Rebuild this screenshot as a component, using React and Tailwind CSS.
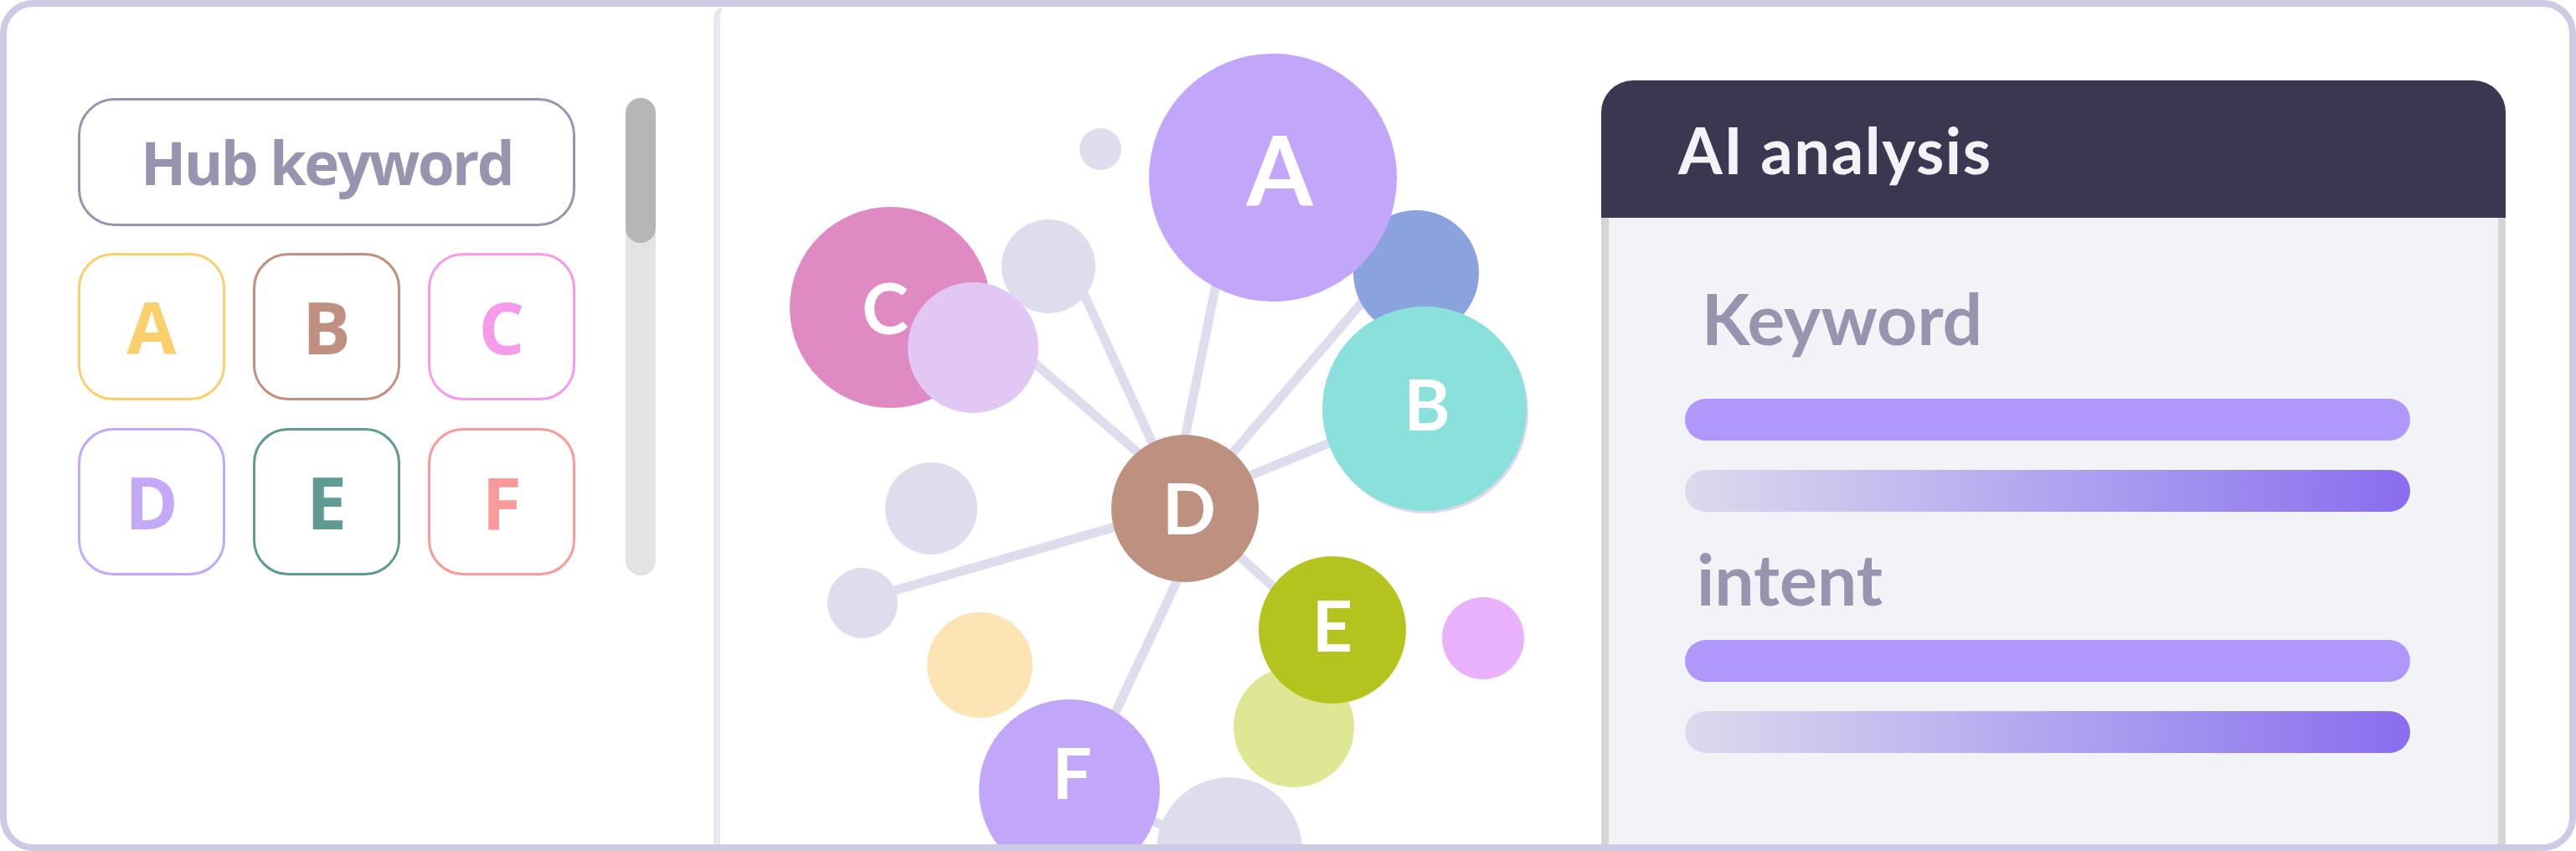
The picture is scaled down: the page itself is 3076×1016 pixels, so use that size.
// Hub keyword graph illustration: keyword picker, bubble graph, AI analysis card

const SANS = { fontFamily: '"Open Sans", "Noto Sans", sans-serif' };
const LABEL = 'Lato, "Noto Sans", sans-serif';

const KEYS = [
  { id: "A", color: "border-[#f9d06c] text-[#f9d06c]" },
  { id: "B", color: "border-[#bf9080] text-[#bf9080]" },
  { id: "C", color: "border-[#f79ae9] text-[#f79ae9]" },
  { id: "D", color: "border-[#c4a8fa] text-[#c4a8fa]" },
  { id: "E", color: "border-[#5f9a93] text-[#5f9a93]" },
  { id: "F", color: "border-[#fa9a9a] text-[#fa9a9a]" },
];

// page coordinates, the svg viewBox starts where the graph area starts
const EDGES = [
  [1398, 607, 1462, 290],
  [1415, 607, 1660, 322],
  [1415, 600, 1640, 507],
  [1412, 607, 1280, 320],
  [1415, 589, 1200, 403],
  [1415, 605, 1030, 716],
  [1415, 606, 1570, 745],
  [1446, 607, 1290, 940],
  [1277, 943, 1468, 1015],
];

const NODES = [
  { x: 1314, y: 178, r: 25, fill: "#dedded" },
  { x: 1252, y: 318, r: 56, fill: "#dedded" },
  { x: 1063, y: 367, r: 120, fill: "#e08ac4", label: "C", lx: 1057, ly: 399, size: 84 },
  { x: 1162, y: 415, r: 78, fill: "#e2c7f5" },
  { x: 1691, y: 326, r: 75, fill: "#8aa3df" },
  { x: 1520, y: 212, r: 148, fill: "#c1a6fa", label: "A", lx: 1528, ly: 246, size: 114 },
  { x: 1703, y: 491, r: 122, fill: "#dcd9ec" },
  { x: 1701, y: 488, r: 122, fill: "#8ae1db", label: "B", lx: 1704, ly: 514, size: 84 },
  { x: 1112, y: 607, r: 55, fill: "#dedded" },
  { x: 1030, y: 720, r: 42, fill: "#dedded" },
  { x: 1170, y: 794, r: 63, fill: "#fce4b4" },
  { x: 1545, y: 868, r: 72, fill: "#dfe694" },
  { x: 1591, y: 752, r: 88, fill: "#b5c31f", label: "E", lx: 1591, ly: 778, size: 84 },
  { x: 1771, y: 762, r: 49, fill: "#e9b1fb" },
  { x: 1468, y: 1015, r: 87, fill: "#dedded" },
  { x: 1277, y: 943, r: 108, fill: "#c1a6fa", label: "F", lx: 1280, ly: 954, size: 84 },
  { x: 1415, y: 607, r: 88, fill: "#be9080", label: "D", lx: 1420, ly: 638, size: 84 },
];

function KeywordPicker() {
  return (
    <div className="flex w-[844px] shrink-0 gap-[60px] pl-[85px] pt-[109px]">
      <div className="flex w-[594px] flex-col gap-[32px]">
        <div className="flex h-[153px] items-center justify-center rounded-[44px] border-[3px] border-[#9893ae]">
          <span className="text-[71px] font-bold leading-none tracking-[-2.6px] text-[#9893ae]" style={SANS}>
            Hub keyword
          </span>
        </div>
        <div className="grid grid-cols-3 gap-[33px]">
          {KEYS.map((k) => (
            <div
              key={k.id}
              className={`flex h-[176px] items-center justify-center rounded-[42px] border-[3px] ${k.color}`}
            >
              <span className="text-[86px] font-bold leading-none" style={SANS}>
                {k.id}
              </span>
            </div>
          ))}
        </div>
      </div>
      <div className="h-[570px] w-[36px] rounded-full bg-[#e3e3e3]">
        <div className="h-[173px] w-full rounded-full bg-[#b6b6b6]" />
      </div>
    </div>
  );
}

function BubbleGraph() {
  return (
    <svg width="1052" height="1000" viewBox="860 8 1052 1000" className="shrink-0">
      {EDGES.map(([x1, y1, x2, y2], i) => (
        <line key={i} x1={x1} y1={y1} x2={x2} y2={y2} stroke="#dedded" strokeWidth="11" />
      ))}
      {NODES.map((n, i) => (
        <g key={i}>
          <circle cx={n.x} cy={n.y} r={n.r} fill={n.fill} />
          {n.label ? (
            <text
              x={n.lx}
              y={n.ly}
              textAnchor="middle"
              fill="#ffffff"
              fontFamily={LABEL}
              fontWeight="700"
              fontSize={n.size}
            >
              {n.label}
            </text>
          ) : null}
        </g>
      ))}
    </svg>
  );
}

function Bar({ gradient }) {
  return (
    <div
      className={`h-[50px] w-[866px] rounded-full ${
        gradient ? "bg-linear-to-r from-[#dddaec] to-[#8a6cee]" : "bg-[#b097fc]"
      }`}
    />
  );
}

function AnalysisCard() {
  return (
    <div className="mt-[88px] flex w-[1080px] shrink-0 flex-col" style={{ fontFamily: LABEL }}>
      <div className="flex h-[164px] items-center rounded-t-[38px] bg-[#3c3751] pl-[92px] pt-[2px]">
        <span className="text-[76px] font-bold leading-none tracking-[1.5px] text-[#f2f3f7]">AI analysis</span>
      </div>
      <div className="flex flex-1 flex-col border-x-[9px] border-[#d6d6d6] bg-[#f2f3f7] pl-[91px]">
        <div className="ml-[20px] mt-[78px] text-[84px] font-bold leading-none text-[#9893ae]">Keyword</div>
        <div className="mt-[54px]">
          <Bar />
        </div>
        <div className="mt-[35px]">
          <Bar gradient />
        </div>
        <div className="ml-[14px] mt-[38px] text-[84px] font-bold leading-none text-[#9893ae]">intent</div>
        <div className="mt-[31px]">
          <Bar />
        </div>
        <div className="mt-[35px]">
          <Bar gradient />
        </div>
      </div>
    </div>
  );
}

export default function App() {
  return (
    <div className="flex h-[1016px] w-[3076px] overflow-hidden rounded-[40px] border-8 border-[#cdcae3] bg-white">
      <KeywordPicker />
      <div className="flex flex-1 rounded-tl-[14px] border-l-8 border-[#e9e8f1]">
        <BubbleGraph />
        <AnalysisCard />
      </div>
    </div>
  );
}
